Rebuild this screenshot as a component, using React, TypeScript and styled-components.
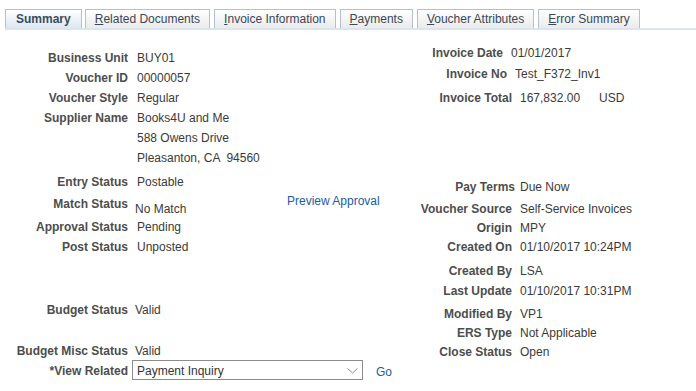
import * as React from "react";
import styled, { createGlobalStyle } from "styled-components";

const GlobalStyle = createGlobalStyle`
    body {
        margin: 0;
        background: #ffffff;
        font-family: "Liberation Sans", Arial, sans-serif;
        font-size: 12px;
        color: #333333;
    }
`

const Page = styled.div`
    width: 696px;
    height: 391px;
    overflow: hidden;
`

const TabBar = styled.div`
    display: flex;
    align-items: flex-end;
    gap: 3px;
    margin: 9px 0 0 5px;
    height: 19px;
    border-bottom: 2px solid #dbe5f1;
`

const Tab = styled.div<{ $active?: boolean }>`
    height: 18px;
    line-height: 18px;
    padding: 0 ${p => (p.$active ? 10 : 9)}px;
    margin-left: ${p => (p.$active ? 0 : 1)}px;
    border: 1px solid #b3c0d1;
    border-bottom: none;
    background: ${p =>
        p.$active
            ? "linear-gradient(#ffffff, #dde7f2)"
            : "linear-gradient(#ffffff, #ebebeb)"};
    color: ${p => (p.$active ? "#3a4b60" : "#3b4756")};
    font-weight: ${p => (p.$active ? "bold" : "normal")};
    white-space: nowrap;

    &:nth-child(2) {
        margin-left: 0;
    }

    u {
        text-decoration: underline;
    }
`

const Main = styled.div`
    display: flex;
    padding-top: 12px;
`

const Column = styled.div<{ $w: number; $top: number }>`
    display: flex;
    flex-direction: column;
    width: ${p => p.$w}px;
    padding-top: ${p => p.$top}px;
    flex-shrink: 0;
`

const Row = styled.div<{ $mt?: number }>`
    display: flex;
    align-items: flex-start;
    height: 20px;
    line-height: 20px;
    margin-top: ${p => p.$mt ?? 0}px;
    white-space: pre;
`

const Label = styled.div<{ $w: number }>`
    width: ${p => p.$w}px;
    flex-shrink: 0;
    text-align: right;
    font-weight: bold;
    color: #4d4d4d;
`

const Value = styled.div<{ $gap?: number; $dy?: number; $w?: number }>`
    margin-left: ${p => p.$gap ?? 9}px;
    padding-top: ${p => p.$dy ?? 0}px;
    width: ${p => (p.$w ? `${p.$w}px` : "auto")};
    flex-shrink: 0;
    color: #3a3a3a;
`

const Amount = styled.span`
    display: inline-block;
    width: 79px;
`

const Link = styled.a<{ $dy?: number }>`
    color: #1d5ba3;
    text-decoration: none;
    margin-top: ${p => p.$dy ?? 0}px;
    cursor: pointer;
`

const Select = styled.div`
    display: flex;
    align-items: center;
    justify-content: space-between;
    box-sizing: border-box;
    width: 231px;
    height: 20px;
    margin: -1px 0 0 4px;
    padding: 1px 4px 0 4px;
    border: 1px solid #8c8c8c;
    background: #ffffff;
    color: #333333;
`

const GoLink = styled(Link)`
    margin-left: 13px;
    margin-top: 1px;
`

const Chevron = () => (
    <svg width="11" height="6" viewBox="0 0 11 6">
        <path d="M0.5 0.5 L5.5 5 L10.5 0.5" fill="none" stroke="#8a8a8a" strokeWidth="1" />
    </svg>
)

type Field = { label: string; value?: React.ReactNode; mt?: number; lw?: number; gap?: number }

const leftFields: Field[] = [
    { label: "Business Unit", value: "BUY01" },
    { label: "Voucher ID", value: "00000057" },
    { label: "Voucher Style", value: "Regular" },
    { label: "Supplier Name", value: "Books4U and Me" },
    { label: "", value: "588 Owens Drive" },
    { label: "", value: "Pleasanton, CA  94560" },
    { label: "Entry Status", value: "Postable", mt: 4 },
]

const rightFields: Field[] = [
    { label: "Invoice Date", value: "01/01/2017", lw: 103 },
    { label: "Invoice No", value: "Test_F372_Inv1", mt: 1, lw: 107 },
    {
        label: "Invoice Total",
        value: (
            <>
                <Amount>167,832.00</Amount>USD
            </>
        ),
        mt: 4,
    },
    { label: "Pay Terms", value: "Due Now", mt: 69, lw: 115, gap: 5 },
    { label: "Voucher Source", value: "Self-Service Invoices", mt: 2 },
    { label: "Origin", value: "MPY", mt: -1 },
    { label: "Created On", value: "01/10/2017 10:24PM", mt: -1 },
    { label: "Created By", value: "LSA", mt: 4 },
    { label: "Last Update", value: "01/10/2017 10:31PM" },
    { label: "Modified By", value: "VP1", mt: 3 },
    { label: "ERS Type", value: "Not Applicable", mt: -1 },
    { label: "Close Status", value: "Open", mt: -1 },
]

const tabs = [
    { key: "S", rest: "ummary", active: true },
    { key: "R", rest: "elated Documents" },
    { key: "I", rest: "nvoice Information" },
    { key: "P", rest: "ayments" },
    { key: "V", rest: "oucher Attributes" },
    { key: "E", rest: "rror Summary" },
]

const App = () => {
    return (
        <Page>
            <GlobalStyle />
            <TabBar>
                {tabs.map(t => (
                    <Tab key={t.key} $active={t.active}>
                        {t.active ? t.key : <u>{t.key}</u>}
                        {t.rest}
                    </Tab>
                ))}
            </TabBar>
            <Main>
                <Column $w={400} $top={6}>
                    {leftFields.map((f, i) => (
                        <Row key={i} $mt={f.mt}>
                            <Label $w={128}>{f.label}</Label>
                            <Value>{f.value}</Value>
                        </Row>
                    ))}
                    <Row $mt={2}>
                        <Label $w={128}>Match Status</Label>
                        <Value $gap={7} $dy={5} $w={152}>No Match</Value>
                        <Link $dy={-3}>Preview Approval</Link>
                    </Row>
                    <Row $mt={3}>
                        <Label $w={128}>Approval Status</Label>
                        <Value>Pending</Value>
                    </Row>
                    <Row>
                        <Label $w={128}>Post Status</Label>
                        <Value>Unposted</Value>
                    </Row>
                    <Row $mt={43}>
                        <Label $w={128}>Budget Status</Label>
                        <Value $gap={7}>Valid</Value>
                    </Row>
                    <Row $mt={21}>
                        <Label $w={128}>Budget Misc Status</Label>
                        <Value $gap={7}>Valid</Value>
                    </Row>
                    <Row>
                        <Label $w={128}>*View Related</Label>
                        <Select>
                            <span>Payment Inquiry</span>
                            <Chevron />
                        </Select>
                        <GoLink>Go</GoLink>
                    </Row>
                </Column>
                <Column $w={296} $top={1}>
                    {rightFields.map((f, i) => (
                        <Row key={i} $mt={f.mt}>
                            <Label $w={f.lw ?? 112}>{f.label}</Label>
                            <Value $gap={f.gap ?? 8}>{f.value}</Value>
                        </Row>
                    ))}
                </Column>
            </Main>
        </Page>
    )
}

export default App
